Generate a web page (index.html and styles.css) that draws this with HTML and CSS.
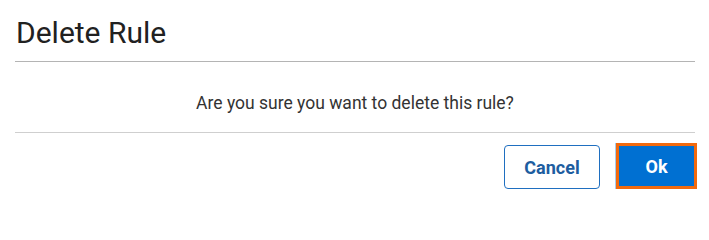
FILE: index.html
```html
<!DOCTYPE html>
<html lang="en">
<head>
<meta charset="utf-8">
<title>Delete Rule</title>
<link rel="stylesheet" href="styles.css">
</head>
<body>
<div class="dialog">
  <div class="dialog-header">
    <h1 class="dialog-title">Delete Rule</h1>
  </div>
  <div class="dialog-body">
    <p class="dialog-message">Are you sure you want to delete this rule?</p>
  </div>
  <div class="dialog-footer">
    <button class="btn btn-secondary" type="button">Cancel</button>
    <button class="btn btn-primary" type="button">Ok</button>
  </div>
</div>
</body>
</html>
```

FILE: styles.css
```css
html, body {
  margin: 0;
  padding: 0;
  background: #ffffff;
}

body {
  font-family: Roboto, "Liberation Sans", Arial, sans-serif;
  color: #222222;
}

.dialog {
  padding: 0 14px 0 15px;
}

.dialog-header {
  padding: 15px 0 10px 1px;
  border-bottom: 1px solid #b4b4b4;
}

.dialog-title {
  margin: 0;
  font-size: 30px;
  line-height: 36px;
  font-weight: 400;
  color: #212121;
}

.dialog-body {
  padding: 29px 0 17px;
  border-bottom: 1px solid #cfcfcf;
  text-align: center;
}

.dialog-message {
  margin: 0;
  font-size: 17.5px;
  line-height: 24px;
  color: #333333;
}

.dialog-footer {
  display: flex;
  justify-content: flex-end;
  align-items: flex-start;
  gap: 16px;
  padding-top: 12px;
  margin-right: -2px;
}

.btn {
  font-family: Roboto, "Liberation Sans", Arial, sans-serif;
  font-size: 18px;
  font-weight: 700;
  padding: 0;
  cursor: pointer;
}

.btn-secondary {
  width: 96px;
  height: 44px;
  background: #ffffff;
  border: 1px solid #1f6fc0;
  border-radius: 4px;
  color: #1d5d9f;
}

.btn-primary {
  box-sizing: content-box;
  width: 75px;
  height: 40px;
  margin-top: -2px;
  background: #0070d2;
  border: 3px solid #f26a0e;
  border-radius: 0;
  color: #ffffff;
  box-shadow: -1px 0 0 0 rgba(0, 112, 210, 0.35);
}
```
